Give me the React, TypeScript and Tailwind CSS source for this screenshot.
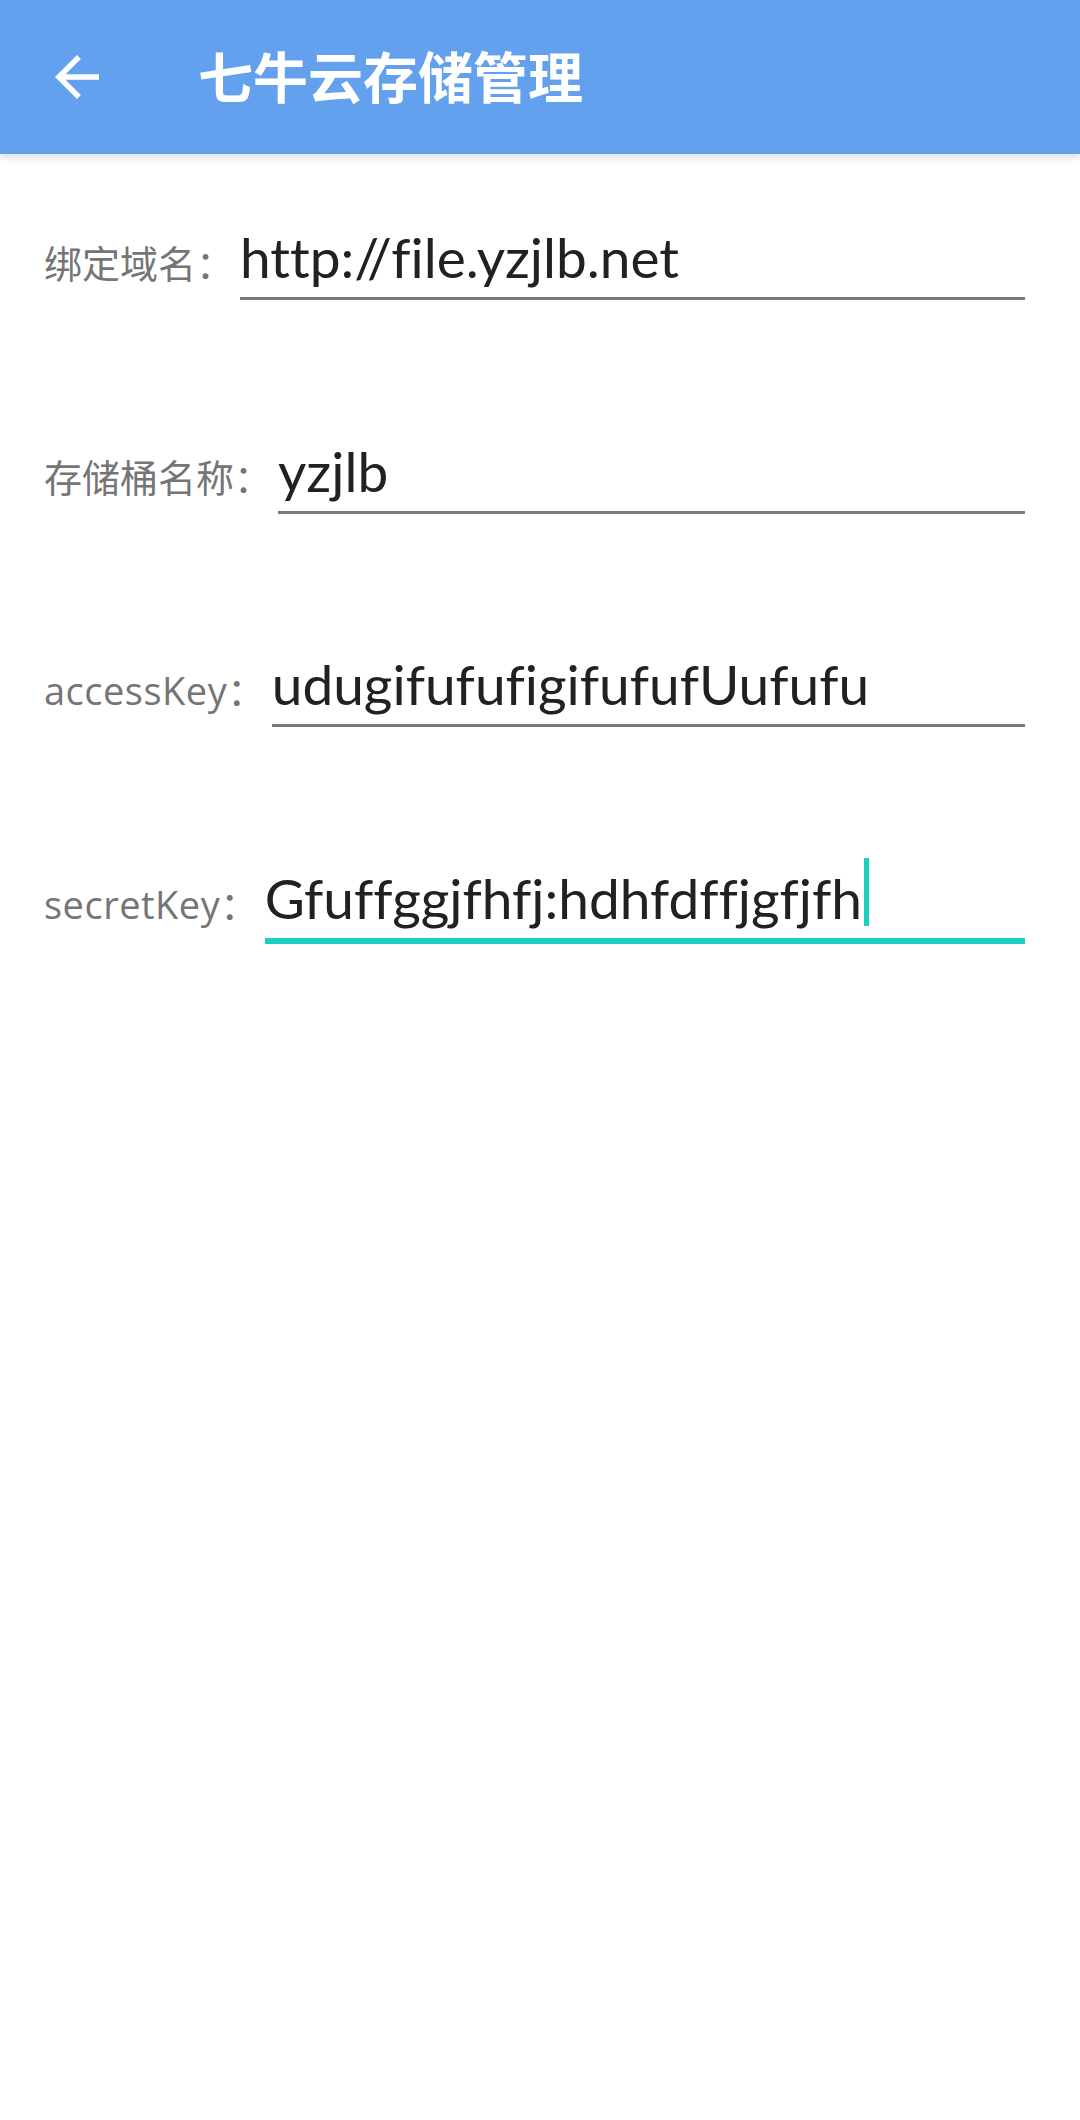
import React from 'react';

type Field = {
  label: string;
  value: string;
  latin?: boolean;
  focused?: boolean;
};

const fields: Field[] = [
  { label: '绑定域名：', value: 'http://file.yzjlb.net' },
  { label: '存储桶名称：', value: 'yzjlb' },
  { label: 'accessKey：', value: 'udugifufufigifufufUufufu', latin: true },
  { label: 'secretKey：', value: 'Gfuffggjfhfj:hdhfdffjgfjfh', latin: true, focused: true },
];

const BackArrow: React.FC = () => (
  <svg className="w-[66px] h-[66px] text-white" viewBox="0 0 24 24" fill="currentColor">
    <path d="M20 11H7.83l5.59-5.59L12 4l-8 8 8 8 1.41-1.41L7.83 13H20v-2z" />
  </svg>
);

const FieldRow: React.FC<{ field: Field }> = ({ field }) => (
  <div className="flex items-start">
    <span
      className={
        field.latin
          ? 'mt-[16px] text-[38px] leading-[46px] tracking-[0.5px] text-[#757575] whitespace-nowrap'
          : 'mt-[16px] text-[38px] leading-[46px] text-[#757575] whitespace-nowrap'
      }
      style={{ fontFamily: '"Open Sans", "Noto Sans CJK SC", sans-serif' }}
    >
      {field.label}
    </span>
    <div
      className={
        field.focused
          ? 'flex-1 ml-[6px] pb-[7px] border-b-[6px] border-[#1ad1c1]'
          : 'flex-1 ml-[6px] pb-[7px] border-b-[3px] border-[#7a7a7a]'
      }
    >
      <p className="text-[55px] leading-[66px] text-[#212121] whitespace-nowrap [font-variant-ligatures:none]">
        {field.value}
        {field.focused && (
          <span className="inline-block w-[5px] h-[68px] -mt-[10px] ml-[2px] align-[-7px] bg-[#1ad1c1]" />
        )}
      </p>
    </div>
  </div>
);

export default function App() {
  return (
    <div
      className="w-[1080px] h-[2120px] bg-white overflow-hidden"
      style={{ fontFamily: '"Lato", "Noto Sans CJK SC", sans-serif' }}
    >
      {/* Toolbar */}
      <header className="h-[154px] bg-[#63a1ee] flex items-center shadow-[0_4px_8px_rgba(0,0,0,0.12)] relative z-10">
        <div className="ml-[44px]">
          <BackArrow />
        </div>
        <h1 className="ml-[88px] text-[55px] font-bold text-white">七牛云存储管理</h1>
      </header>

      {/* Form */}
      <main className="pt-[70px] pl-[44px] pr-[55px] flex flex-col gap-[137.5px]">
        {fields.map((f) => (
          <FieldRow key={f.label} field={f} />
        ))}
      </main>
    </div>
  );
}
